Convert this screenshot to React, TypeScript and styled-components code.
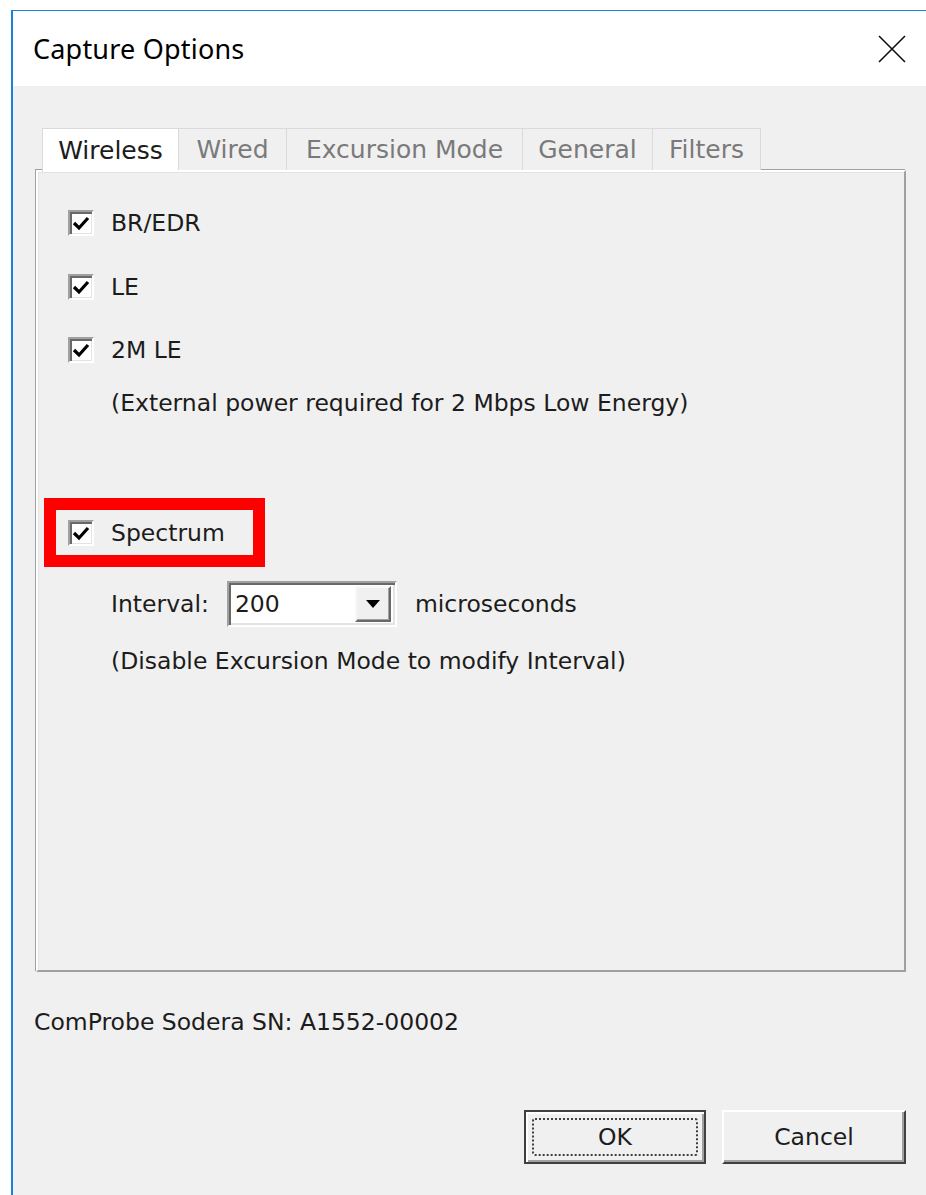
import React from "react";
import styled, { createGlobalStyle } from "styled-components";

const GlobalStyle = createGlobalStyle`
  html, body {
    margin: 0;
    padding: 0;
    background: #ffffff;
  }
  body {
    font-family: "DejaVu Sans", Verdana, sans-serif;
  }
`;

const uiFont = `"DejaVu Sans", Verdana, sans-serif`;

const Page = styled.div`
  width: 926px;
  height: 1195px;
  overflow: hidden;
  padding: 10px 0 0 11px;
  box-sizing: border-box;
`;

const Window = styled.div`
  border-top: 1px solid #1883d7;
  border-left: 2px solid #1883d7;
  background: #f0f0f0;
  height: 100%;
  display: flex;
  flex-direction: column;
`;

const TitleBar = styled.div`
  height: 75px;
  background: #ffffff;
  display: flex;
  align-items: center;
  justify-content: space-between;
  padding: 0 19px 0 20px;
  flex-shrink: 0;
`;

const Title = styled.span`
  font-family: "Noto Sans", "Open Sans", sans-serif;
  font-size: 27px;
  color: #000;
  letter-spacing: 0.2px;
`;

const CloseButton = styled.button`
  border: none;
  background: transparent;
  padding: 0;
  width: 30px;
  height: 30px;
  display: flex;
  align-items: center;
  justify-content: center;
`;

const Body = styled.div`
  padding: 42px 20px 0 23px;
  display: flex;
  flex-direction: column;
  font-family: ${uiFont};
  font-size: 23.5px;
  color: #1c1c1c;
`;

const TabStrip = styled.div`
  display: flex;
  height: 42px;
  padding-left: 7px;
  position: relative;
  z-index: 1;
`;

const Tab = styled.div<{ $active?: boolean; $width: number }>`
  width: ${(p) => p.$width}px;
  box-sizing: border-box;
  display: flex;
  align-items: center;
  justify-content: center;
  font-size: 25px;
  color: ${(p) => (p.$active ? "#1c1c1c" : "#7a7a7a")};
  background: ${(p) => (p.$active ? "#ffffff" : "#f0f0f0")};
  border: 1px solid #dadada;
  border-bottom: none;
  border-right-color: ${(p) => (p.$active ? "#ffffff" : "#dadada")};
  margin-bottom: ${(p) => (p.$active ? "-2px" : "0")};
  margin-left: -1px;
`;

const Panel = styled.div`
  height: 802px;
  box-sizing: border-box;
  border-top: 2px solid #ffffff;
  border-left: 2px solid #ffffff;
  border-right: 2px solid #a0a0a0;
  border-bottom: 2px solid #a0a0a0;
  box-shadow: inset 1px 1px 0 #e3e3e3, -1px -1px 0 #a0a0a0;
  padding: 35px 0 0 30px;
  display: flex;
  flex-direction: column;
`;

const CheckRow = styled.label<{ $gap?: number }>`
  display: flex;
  align-items: center;
  height: 32px;
  gap: 17px;
  margin-bottom: ${(p) => p.$gap ?? 0}px;
`;

const Box = styled.span`
  width: 26px;
  height: 26px;
  box-sizing: border-box;
  border-top: 2px solid #a0a0a0;
  border-left: 2px solid #a0a0a0;
  border-right: 2px solid #ffffff;
  border-bottom: 2px solid #ffffff;
  box-shadow: inset 2px 2px 0 #696969, inset -1px -1px 0 #e3e3e3;
  background: #ffffff;
  display: flex;
  align-items: center;
  justify-content: center;
  flex-shrink: 0;
`;

const Note = styled.div<{ $top?: number }>`
  margin: ${(p) => p.$top ?? 0}px 0 0 43px;
  line-height: 32px;
`;

const Highlight = styled.div`
  align-self: flex-start;
  margin: 79px 0 0 -24px;
  border: 12px solid #ff0000;
  padding: 7px 28px 6px 12px;
`;

const IntervalRow = styled.div`
  display: flex;
  align-items: center;
  gap: 18px;
  margin: 14px 0 0 43px;
`;

const Combo = styled.div`
  width: 170px;
  height: 46px;
  flex-shrink: 0;
  box-sizing: border-box;
  border-top: 2px solid #a0a0a0;
  border-left: 2px solid #a0a0a0;
  border-right: 2px solid #ffffff;
  border-bottom: 2px solid #ffffff;
  box-shadow: inset 2px 2px 0 #696969, inset -2px -2px 0 #e3e3e3;
  background: #ffffff;
  display: flex;
  align-items: center;
  padding: 0 4px 0 6px;
`;

const ComboValue = styled.span`
  flex: 1;
`;

const DropButton = styled.span`
  width: 36px;
  height: 36px;
  box-sizing: border-box;
  background: #f0f0f0;
  border-top: 2px solid #f8f8f8;
  border-left: 2px solid #f8f8f8;
  border-right: 2px solid #696969;
  border-bottom: 2px solid #696969;
  box-shadow: inset -1px -1px 0 #a0a0a0;
  display: flex;
  align-items: center;
  justify-content: center;
`;

const Serial = styled.div`
  margin: 36px 0 0 -2px;
`;

const ButtonBar = styled.div`
  display: flex;
  justify-content: flex-end;
  gap: 16px;
  margin-top: 74px;
`;

const PushButton = styled.button<{ $default?: boolean }>`
  width: ${(p) => (p.$default ? 182 : 184)}px;
  height: 54px;
  box-sizing: border-box;
  font-family: ${uiFont};
  font-size: 23.5px;
  color: #1c1c1c;
  background: #f0f0f0;
  border-top: 2px solid ${(p) => (p.$default ? "#404040" : "#ffffff")};
  border-left: 2px solid ${(p) => (p.$default ? "#404040" : "#ffffff")};
  border-right: 2px solid #404040;
  border-bottom: 2px solid #404040;
  box-shadow: ${(p) =>
    p.$default
      ? "inset 2px 2px 0 #ffffff, inset -2px -2px 0 #a0a0a0"
      : "inset -2px -2px 0 #a0a0a0"};
  padding: 6px;
  display: flex;
`;

const FocusRing = styled.span<{ $show?: boolean }>`
  flex: 1;
  display: flex;
  align-items: center;
  justify-content: center;
  border: 2px dotted ${(p) => (p.$show ? "#404040" : "transparent")};
  border-radius: 3px;
`;

const Check = () => (
  <svg width="18" height="16" viewBox="0 0 18 16">
    <path d="M2 8 L7 13 L16 3" fill="none" stroke="#000" strokeWidth="3.2" />
  </svg>
);

const CheckBox = ({ label, gap }: { label: string; gap?: number }) => (
  <CheckRow $gap={gap}>
    <Box>
      <Check />
    </Box>
    {label}
  </CheckRow>
);

// tab captions with their fixed widths
const tabs: [string, number][] = [
  ["Wireless", 137],
  ["Wired", 109],
  ["Excursion Mode", 237],
  ["General", 131],
  ["Filters", 109],
];

export default function App() {
  return (
    <>
      <GlobalStyle />
      <Page>
        <Window>
          <TitleBar>
            <Title>Capture Options</Title>
            <CloseButton aria-label="Close">
              <svg width="28" height="28" viewBox="0 0 28 28">
                <path d="M1 1 L27 27 M27 1 L1 27" stroke="#111" strokeWidth="1.6" />
              </svg>
            </CloseButton>
          </TitleBar>
          <Body>
            <TabStrip>
              {tabs.map(([t, w], i) => (
                <Tab key={t} $active={i === 0} $width={w}>
                  {t}
                </Tab>
              ))}
            </TabStrip>
            <Panel>
              <CheckBox label="BR/EDR" gap={32} />
              <CheckBox label="LE" gap={31} />
              <CheckBox label="2M LE" />
              <Note $top={21}>(External power required for 2 Mbps Low Energy)</Note>
              <Highlight>
                <CheckBox label="Spectrum" />
              </Highlight>
              <IntervalRow>
                Interval:
                <Combo>
                  <ComboValue>200</ComboValue>
                  <DropButton>
                    <svg width="16" height="10" viewBox="0 0 16 10">
                      <path d="M1 1 H15 L8 9 Z" fill="#000" />
                    </svg>
                  </DropButton>
                </Combo>
                microseconds
              </IntervalRow>
              <Note $top={18}>(Disable Excursion Mode to modify Interval)</Note>
            </Panel>
            <Serial>ComProbe Sodera SN: A1552-00002</Serial>
            <ButtonBar>
              <PushButton $default>
                <FocusRing $show>OK</FocusRing>
              </PushButton>
              <PushButton>
                <FocusRing>Cancel</FocusRing>
              </PushButton>
            </ButtonBar>
          </Body>
        </Window>
      </Page>
    </>
  );
}
